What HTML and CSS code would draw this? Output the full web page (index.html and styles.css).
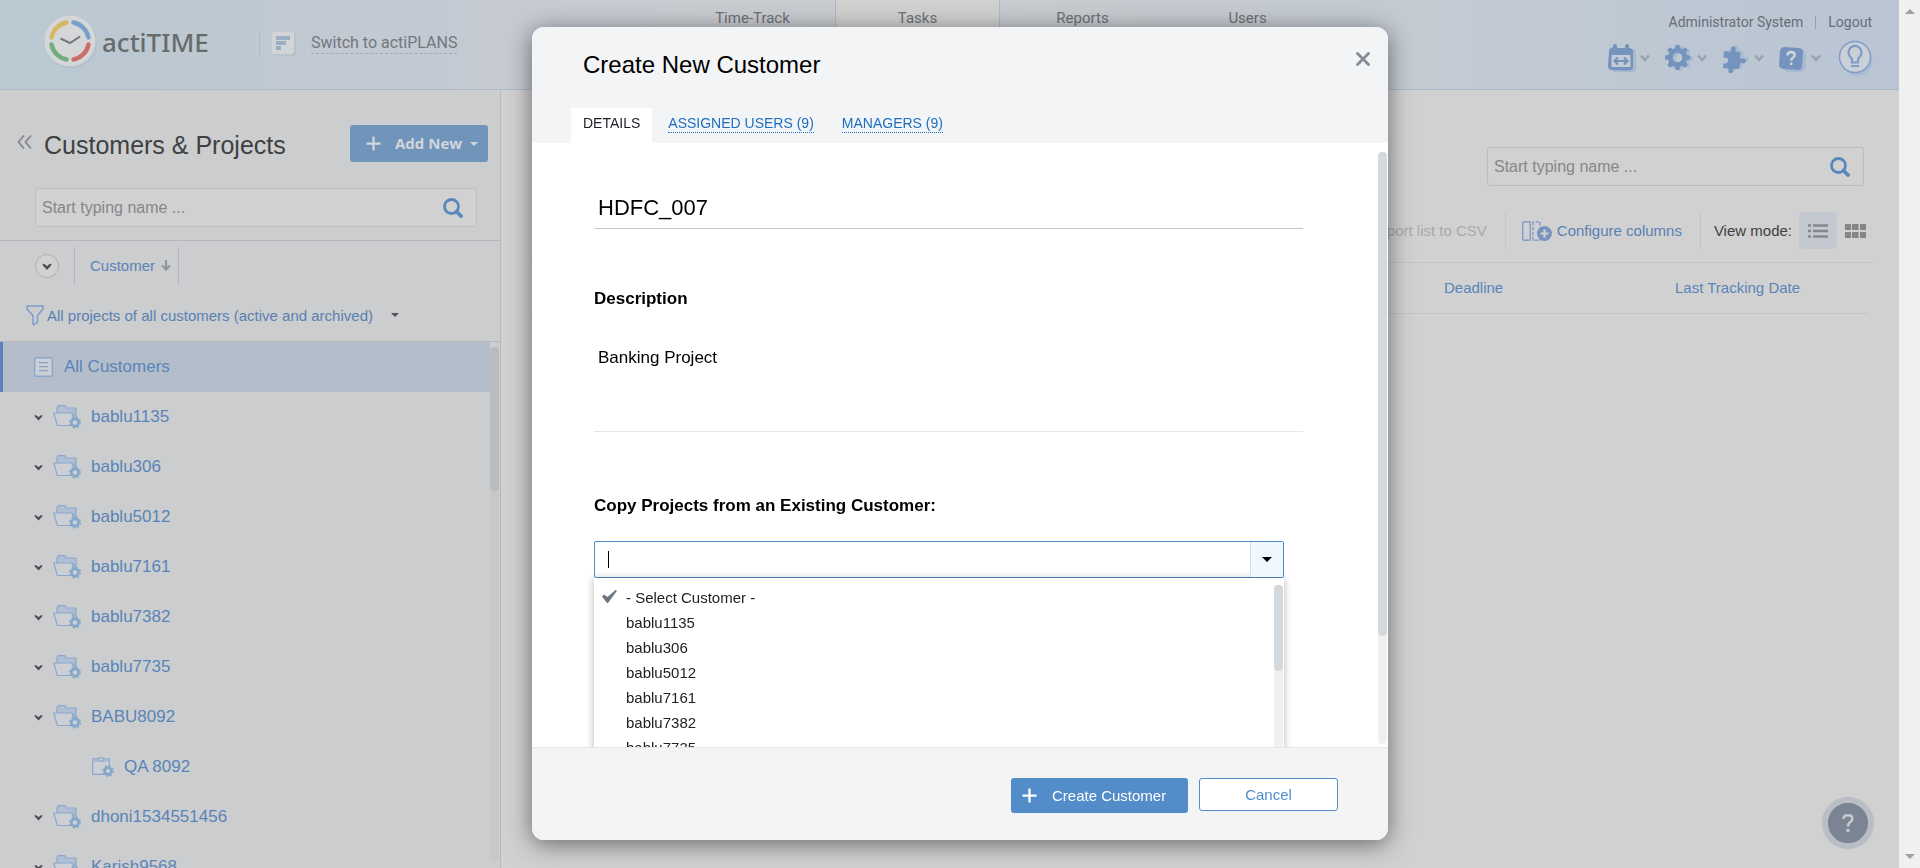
FILE: index.html
```html
<!DOCTYPE html>
<html lang="en">
<head>
<meta charset="utf-8">
<title>actiTIME - Customers &amp; Projects</title>
<link rel="stylesheet" href="styles.css">
</head>
<body>
<svg width="0" height="0" class="defs" aria-hidden="true">
  <defs>
    <symbol id="search" viewBox="0 0 20 20"><circle cx="8.5" cy="8.5" r="7" fill="none" stroke="#5a87bd" stroke-width="2.8"/><path d="M13.5 13.5l4.500 4.500" stroke="#5a87bd" stroke-width="3.8" stroke-linecap="round"/></symbol>
    <symbol id="gear" viewBox="0 0 26 26"><path fill-rule="evenodd" d="M11 0h4l.6 3.4 2.4 1 2.9-2 2.8 2.8-2 2.9 1 2.4 3.3.5v4l-3.3.6-1 2.4 2 2.9-2.8 2.8-2.9-2-2.4 1-.6 3.3h-4l-.6-3.3-2.4-1-2.9 2-2.8-2.8 2-2.9-1-2.4L0 15v-4l3.300-.5 1-2.400-2-2.900 2.800-2.800 2.900 2 2.400-1zM13 8a5 5 0 1 0 0 10a5 5 0 0 0 0-10z"/></symbol>
    <symbol id="puzzle" viewBox="0 0 26 28"><path d="M2 6l6 .5c1.500 0 1.500-1 1.200-2a2.700 2.700 0 1 1 5 0c-.4 1-.2 2 1 2l4 .3-.4 6c0 1 1 1.300 2 .8a2.700 2.700 0 1 1 0 4.600c-1-.5-2-.2-2.200.8l-.4 5.500-5.700-.3c-1 0-1.500.8-1 1.700a2.500 2.500 0 1 1-4.800 0c.3-1 0-2-1-2L1 23.500l.5-5c2 .8 4.800 0 5-2.600.2-2.900-2.700-4.200-5-3z"/></symbol>
    <symbol id="chev" viewBox="0 0 10 8"><path d="M1 1.500l4 4.500 4-4.500" fill="none" stroke="#9aa4ad" stroke-width="2.600"/></symbol>
    <symbol id="folder" viewBox="0 0 28 24">
      <path d="M4 8V3l1.500-2.300h6L13.500 3H23v9L20 9H4z" fill="#b1bfd4" stroke="#8ba8cc" stroke-width="1.200"/>
      <path d="M.8 8h18l1.800 4v8.500H4.300z" fill="#ccd0d4" stroke="#8ba8cc" stroke-width="1.200"/>
      <circle cx="22" cy="17.500" r="3.600" fill="#ccd0d4" stroke="#84a7c9" stroke-width="2.600"/>
      <circle cx="22" cy="17.500" r="5.400" fill="none" stroke="#84a7c9" stroke-width="1.400" stroke-dasharray="2.100 2.140"/>
    </symbol>
    <symbol id="tick" viewBox="0 0 10 7"><path d="M.5 .8l2.400 .4L5 3.200 7.100 1.200l2.400-.4-.6 2L5 6.900 1.100 2.800z" fill="#4b4d50"/></symbol>
    <symbol id="plus" viewBox="0 0 16 16"><path d="M8 .5v15M.5 8h15" stroke="currentColor" stroke-width="2.400"/></symbol>
  </defs>
</svg>

<div class="app">
  <header class="topbar">
    <a class="logo" href="#">
      <svg width="54" height="54" viewBox="0 0 54 54" aria-hidden="true">
        <circle cx="27.500" cy="28" r="25.500" fill="#b3c0cd"/><circle cx="26" cy="26" r="25.500" fill="#d5d6d8"/>
        <g fill="none" stroke-width="4.400" stroke-linecap="round">
          <path d="M7.500 22.500A19 19 0 0 1 22.500 7.500" stroke="#d6b764"/>
          <path d="M29.500 7.500A19 19 0 0 1 44.500 22.500" stroke="#769fca"/>
          <path d="M44.500 29.500A19 19 0 0 1 29.500 44.500" stroke="#cb6d64"/>
          <path d="M22.500 44.500A19 19 0 0 1 7.500 29.500" stroke="#72ad7c"/>
        </g>
        <path d="M16.500 23.500l9.500 4.500 10-6.500" fill="none" stroke="#75777f" stroke-width="2"/>
      </svg>
      <span>actiTIME</span>
    </a>
    <a class="switch" href="#">
      <svg width="24" height="24" viewBox="0 0 24 24" aria-hidden="true"><rect x="2" y="2" width="22" height="22" rx="3" fill="#b6c3cf"/><rect width="22" height="22" rx="3" fill="#d2d4d6"/><path d="M4 4h14v4H4zM4 9h10v4H4zM4 14h5v4H4z" fill="#9aaec6"/></svg>
      <span>Switch to actiPLANS</span>
    </a>
    <nav class="mainnav">
      <a href="#">Time-Track</a><a href="#" class="current">Tasks</a><a href="#">Reports</a><a href="#">Users</a>
    </nav>
    <div class="account">
      <div class="who"><a href="#">Administrator System</a><i></i><a href="#">Logout</a></div>
      <div class="tools">
        <button class="tool" aria-label="Calendar">
          <svg width="28" height="29" viewBox="0 0 28 29"><rect x="3" y="5" width="25" height="23" rx="4" fill="#a9bad0"/><path d="M5 3.500V2a2 2 0 0 1 4 0v2h8V2a2 2 0 0 1 4 0v2a4 4 0 0 1 4 4v14a4 4 0 0 1-4 4.500L4 26a4 4 0 0 1-4-4L1 7a4 4 0 0 1 4-3.500z" fill="#7494be"/><path d="M3.500 11h19v12h-19z" fill="#c3cbd3"/><path d="M7 17h12M10 13.500L6.500 17l3.500 3.500M16 13.500L19.500 17 16 20.500" fill="none" stroke="#7494be" stroke-width="2.200"/></svg>
          <svg width="10" height="8"><use href="#chev"/></svg>
        </button>
        <button class="tool" aria-label="Settings">
          <svg width="28" height="29" viewBox="0 0 28 29"><use href="#gear" x="3" y="2" width="25" height="25" fill="#a9bad0"/><use href="#gear" y="1" width="25" height="25" fill="#7494be"/></svg>
          <svg width="10" height="8"><use href="#chev"/></svg>
        </button>
        <button class="tool" aria-label="Integrations">
          <svg width="28" height="29" viewBox="0 0 28 29"><use href="#puzzle" x="3" y="0" width="25" height="27" fill="#a9bad0"/><use href="#puzzle" x="0" y="1" width="25" height="28" fill="#7494be"/></svg>
          <svg width="10" height="8"><use href="#chev"/></svg>
        </button>
        <button class="tool" aria-label="Help">
          <svg width="28" height="29" viewBox="0 0 28 29"><rect x="3" y="5" width="24" height="23" rx="6" fill="#a9bad0"/><path d="M6 3l14 1q4 .5 4 4l-1 14q-.5 4-4 4l-14-1q-5-.5-5-4L1 7q.5-4 5-4z" fill="#7494be"/><path d="M8.500 11.500q0-3.500 3.600-3.500 3.500 0 3.500 3 0 1.700-1.700 2.700-1.700.9-1.700 2.800M12.200 18.500v2.500" fill="none" stroke="#d3d6da" stroke-width="2.400"/></svg>
          <svg width="10" height="8"><use href="#chev"/></svg>
        </button>
        <button class="tool tips" aria-label="Tips">
          <svg width="36" height="36" viewBox="0 0 36 36"><circle cx="19" cy="20" r="15.500" fill="#a9bad0"/><circle cx="17" cy="17" r="15.500" fill="#cbd0d7" stroke="#7d9ccb" stroke-width="1.400"/><path d="M14 22.500v-2.500q0-1.500-1.300-2.700a6.500 6.500 0 1 1 8.600 0Q20 18.500 20 20v2.500z" fill="none" stroke="#7d9ccb" stroke-width="2.200"/><path d="M13 26h8" stroke="#7d9ccb" stroke-width="2"/></svg>
        </button>
      </div>
    </div>
  </header>

  <div class="columns">
    <aside class="side">
      <div class="side-head">
        <button class="collapse" aria-label="Collapse"><svg width="15" height="14" viewBox="0 0 15 14"><path d="M7 .5L1.500 7 7 13.500M14 .5L8.500 7l5.500 6.500" fill="none" stroke="#86888c" stroke-width="1.800"/></svg></button>
        <h1>Customers &amp; Projects</h1>
        <button class="addnew"><svg width="15" height="15"><use href="#plus"/></svg><span>Add New</span><i class="caret"></i></button>
      </div>
      <label class="search side-search"><input type="text" placeholder="Start typing name ..." aria-label="Search customers"><svg width="20" height="20"><use href="#search"/></svg></label>
      <div class="sortbar">
        <button class="round" aria-label="Expand all"><svg width="10" height="7"><use href="#tick"/></svg></button>
        <a class="sort" href="#">Customer <svg width="10" height="11" viewBox="0 0 10 11"><path d="M5 0v9M1 5.500l4 4 4-4" fill="none" stroke="#8c97a6" stroke-width="2.200"/></svg></a>
      </div>
      <button class="filter"><svg width="18" height="21" viewBox="0 0 18 21"><path d="M1 1h16v3l-5.500 6.500V17L8 20l-1-1v-8.500L1 4z" fill="none" stroke="#7f9cc9" stroke-width="1.500" stroke-linejoin="round"/></svg><span>All projects of all customers (active and archived)</span><i class="caret dark"></i></button>
      <div class="tree-wrap">
        <div class="tree">
          <a class="row all" href="#"><svg width="19" height="20" viewBox="0 0 19 20"><rect x=".7" y=".7" width="17.600" height="18.600" rx="1" fill="#ccd0d4" stroke="#8ba8cc" stroke-width="1.400"/><path d="M5 5.700h9M5 9.700h9M5 13.700h9" stroke="#8ba0c4" stroke-width="1.300"/></svg>All Customers</a>
          <a class="row" href="#"><svg width="9" height="7"><use href="#tick"/></svg><svg width="28" height="24"><use href="#folder"/></svg>bablu1135</a>
          <a class="row" href="#"><svg width="9" height="7"><use href="#tick"/></svg><svg width="28" height="24"><use href="#folder"/></svg>bablu306</a>
          <a class="row" href="#"><svg width="9" height="7"><use href="#tick"/></svg><svg width="28" height="24"><use href="#folder"/></svg>bablu5012</a>
          <a class="row" href="#"><svg width="9" height="7"><use href="#tick"/></svg><svg width="28" height="24"><use href="#folder"/></svg>bablu7161</a>
          <a class="row" href="#"><svg width="9" height="7"><use href="#tick"/></svg><svg width="28" height="24"><use href="#folder"/></svg>bablu7382</a>
          <a class="row" href="#"><svg width="9" height="7"><use href="#tick"/></svg><svg width="28" height="24"><use href="#folder"/></svg>bablu7735</a>
          <a class="row" href="#"><svg width="9" height="7"><use href="#tick"/></svg><svg width="28" height="24"><use href="#folder"/></svg>BABU8092</a>
          <a class="row child" href="#"><svg width="22" height="20" viewBox="0 0 22 20"><path d="M.7 2h16.600v15.300H.7z" fill="#ccd0d4" stroke="#8ba8cc" stroke-width="1.300"/><path d="M1 2h16v3H1z" fill="#a9bcd2"/><rect x="7" y=".6" width="4" height="3.400" fill="#ccd0d4" stroke="#84a7c9"/><circle cx="16" cy="14" r="3.400" fill="#ccd0d4" stroke="#84a7c9" stroke-width="2.600"/><circle cx="16" cy="14" r="5.200" fill="none" stroke="#84a7c9" stroke-width="1.400" stroke-dasharray="2 2.080"/></svg>QA 8092</a>
          <a class="row" href="#"><svg width="9" height="7"><use href="#tick"/></svg><svg width="28" height="24"><use href="#folder"/></svg>dhoni1534551456</a>
          <a class="row" href="#"><svg width="9" height="7"><use href="#tick"/></svg><svg width="28" height="24"><use href="#folder"/></svg>Karish9568</a>
        </div>
        <div class="track side-track"><div class="thumb"></div></div>
      </div>
    </aside>
    <main class="content">
      <label class="search main-search"><input type="text" placeholder="Start typing name ..." aria-label="Search tasks"><svg width="20" height="20"><use href="#search"/></svg></label>
      <div class="toolbar">
        <button class="csv" disabled>Export list to CSV</button>
        <button class="configure"><svg width="30" height="20" viewBox="0 0 30 20"><rect x=".7" y=".7" width="7.600" height="18.600" rx="1.500" fill="none" stroke="#7f9cc9" stroke-width="1.400"/><path d="M11 1v18.300h7V.7z" fill="none" stroke="#7f9cc9" stroke-width="1.400" stroke-dasharray="3.500 1.500"/><circle cx="22.500" cy="12.500" r="7.500" fill="#7794bf"/><path d="M22.500 8.500v8M18.500 12.500h8" stroke="#d1d1d1" stroke-width="2.200"/></svg>Configure columns</button>
        <div class="viewmode"><span>View mode:</span>
          <button class="mode on" aria-label="List"><svg width="20" height="14" viewBox="0 0 20 14"><path d="M0 1.500h3M0 7h3M0 12.500h3M5 1.500h15M5 7h15M5 12.500h15" stroke="#85878b" stroke-width="2.600"/></svg></button>
          <button class="mode" aria-label="Grid"><svg width="21" height="14" viewBox="0 0 21 14"><path d="M0 0h6v6H0zM7 0h6.500v6H7zM15 0h6v6h-6zM0 8h6v6H0zM7 8h6.500v6H7zM15 8h6v6h-6z" fill="#858585"/></svg></button>
        </div>
      </div>
      <table class="tasks"><thead><tr><th class="c-name"></th><th class="c-dead"><a href="#">Deadline</a></th><th class="c-last"><a href="#">Last Tracking Date</a></th></tr></thead></table>
    </main>
  </div>
  <button class="help" aria-label="Help center"><svg width="12" height="19" viewBox="0 0 12 19"><path d="M1.500 5q0-3.800 4.500-3.800 4.300 0 4.300 3.600 0 2-2.200 3.300Q6 9.300 6 12.500" fill="none" stroke="#c5c8cd" stroke-width="2.600"/><circle cx="6" cy="16.500" r="1.800" fill="#c5c8cd"/></svg></button>
</div>
<div class="page-scroll" aria-hidden="true"><i class="up"></i><i class="down"></i></div>

<div class="overlay">
  <section class="modal" role="dialog" aria-labelledby="dlg-title">
    <div class="modal-head">
      <div class="modal-title"><h2 id="dlg-title">Create New Customer</h2>
        <button class="close" aria-label="Close"><svg width="14" height="14" viewBox="0 0 14 14"><path d="M1.500 1.500l11 11M12.500 1.500l-11 11" stroke="#868a92" stroke-width="2.800" stroke-linecap="round"/></svg></button></div>
      <div class="tabs"><a class="tab on" href="#">DETAILS</a><a class="tab" href="#"><span>ASSIGNED USERS (9)</span></a><a class="tab" href="#"><span>MANAGERS (9)</span></a></div>
    </div>
    <div class="modal-body">
      <div class="form">
        <input class="name" type="text" value="HDFC_007" aria-label="Customer name">
        <label class="label" for="desc">Description</label>
        <textarea id="desc" class="desc">Banking Project</textarea>
        <label class="label copy" for="from">Copy Projects from an Existing Customer:</label>
        <div class="combo">
          <div class="combo-box"><input id="from" type="text" role="combobox" aria-expanded="true"><i class="cursor"></i><button class="combo-btn" aria-label="Open list"><i class="caret black"></i></button></div>
          <div class="menu">
            <ul role="listbox">
              <li role="option" aria-selected="true"><svg width="15" height="13" viewBox="0 0 15 13"><path d="M0 6.500L2 4.500l3.500 2.500L13.500 0 15 .8 6 13H5z" fill="#6d767e"/></svg>- Select Customer -</li>
              <li role="option">bablu1135</li><li role="option">bablu306</li><li role="option">bablu5012</li><li role="option">bablu7161</li><li role="option">bablu7382</li><li role="option">bablu7735</li>
            </ul>
            <div class="track menu-track"><div class="thumb"></div></div>
          </div>
        </div>
      </div>
      <div class="track modal-track"><div class="thumb"></div></div>
    </div>
    <div class="modal-foot">
      <button class="create"><svg width="15" height="15"><use href="#plus"/></svg>Create Customer</button>
      <button class="cancel">Cancel</button>
    </div>
  </section>
</div>
</body>
</html>
```
FILE: styles.css
```css
* { box-sizing: border-box; }
body { margin: 0; height: 100vh; display: flex; overflow: hidden; background: #d1d1d1; font-family: "Liberation Sans", Arial, sans-serif; font-size: 15px; color: #3f4042; }
a { color: #5a84b9; text-decoration: none; }
button { font: inherit; color: inherit; background: none; border: 0; padding: 0; cursor: pointer; }
input, textarea { font: inherit; border: 0; outline: 0; background: none; padding: 0; min-width: 0; }
svg { flex: none; display: block; }
h1, h2, ul { margin: 0; padding: 0; font-weight: 400; list-style: none; }
.defs { position: absolute; }
.app { flex: 1; min-width: 0; display: flex; flex-direction: column; position: relative; }

/* window scrollbar */
.page-scroll { width: 21px; background: #f0f0f0; display: flex; flex-direction: column; justify-content: space-between; align-items: center; padding: 9px 0; }
.up, .down { border: 5px solid transparent; }
.up { border-top: 0; border-bottom-color: #a0a0a0; }
.down { border-bottom: 0; border-top-color: #a0a0a0; }

/* top bar */
.topbar { height: 90px; flex: none; display: grid; grid-template-columns: 670px 1fr auto; border-bottom: 1px solid #afb9c7; background: linear-gradient(90deg, #b9c8d1 0, #c6cad3 28%, #c9ccd0 38%, #c7cacf 58%, #c3cbd3 75%, #b9c5d4 100%); font-family: Roboto, sans-serif; grid-template-areas: "logo nav account"; }
.logo { grid-area: logo; justify-self: start; display: flex; gap: 4px; padding: 15px 0 0 44px; color: #686b6c; font: 500 26px/54px "Noto Sans", sans-serif; }
.switch { grid-area: logo; align-self: start; justify-self: start; margin: 32px 0 0 259px; padding-left: 12px; height: 24px; border-left: 1px solid #adbac8; display: flex; gap: 15px; font-size: 16px; line-height: 22px; color: #72777e; }
.switch span { border-bottom: 1px dashed #a0a9b2; height: 22px; }
.mainnav { grid-area: nav; display: flex; }
.mainnav a { width: 165px; padding-top: 9px; text-align: center; line-height: 18px; color: #6d7077; }
.mainnav .current { background: #d1d1d1; border: solid #b1b8c4; border-width: 0 1px; }
.account { grid-area: account; display: flex; flex-direction: column; align-items: flex-end; padding-right: 25px; }
.who { display: flex; align-items: center; gap: 12px; padding: 13px 2px 0 0; font-size: 14px; line-height: 18px; }
.who a { color: #6a6d74; }
.who i { width: 1px; height: 13px; background: #a09d9c; }
.tools { display: flex; align-items: center; gap: 15px; margin-top: 9px; }
.tool { display: flex; align-items: center; gap: 4px; height: 36px; }
.tips { margin-left: 2px; }

/* left column */
.columns { flex: 1; min-height: 0; display: flex; }
.side { width: 501px; flex: none; display: flex; flex-direction: column; background: #cbcdce; border-right: 1px solid #b8babf; }
.side-head { display: flex; align-items: center; padding: 35px 12px 0 17px; }
.collapse { width: 27px; padding-bottom: 4px; }
h1 { font-size: 25px; line-height: 30px; flex: 1; padding-top: 2px; }
.addnew { width: 138px; height: 37px; border-radius: 3px; background: #7094ba; color: #d2d6da; display: flex; align-items: center; padding: 0 10px 0 16px; font: 700 15px/20px "Open Sans", sans-serif; }
.addnew span { flex: 1; text-align: left; padding: 0 0 2px 14px; }
.caret { border: 4px solid transparent; border-bottom: 0; border-top-color: #d2d6da; }
.caret.dark { border-top-color: #505256; }
.caret.black { border-width: 5px 5px 0; border-top-color: #000; }
.search { display: flex; align-items: center; height: 39px; border: 1px solid #bfc0c1; border-radius: 3px; background: #d1d1d1; padding: 0 13px 0 6px; font-size: 16px; }
.search input { flex: 1; height: 100%; }
.search input::placeholder { color: #85878a; opacity: 1; }
.side-search { margin: 26px 23px 0 35px; }
.sortbar { display: flex; align-items: center; margin-top: 13px; border-top: 1px solid #b5b7ba; padding: 6px 0 0 35px; }
.round { width: 24px; height: 24px; border: 1px solid #aeb0b2; border-radius: 50%; background: #d1d1d1; display: grid; place-items: center; }
.sort { display: flex; align-items: center; gap: 6px; height: 38px; margin-left: 15px; padding: 0 7px 2px 15px; border: solid #b5b7ba; border-width: 0 1px; }
.filter { display: flex; align-items: center; gap: 3px; height: 57px; padding: 4px 0 0 26px; color: #5a80b4; border-bottom: 1px solid #b5b7ba; }
.filter .caret { margin-left: 15px; }
.tree-wrap { flex: 1; min-height: 0; display: flex; }
.tree { flex: 1; overflow: hidden; }
.row { display: flex; align-items: center; height: 50px; padding-left: 34px; font-size: 17px; }
.row svg + svg { margin: 0 10px; }
.all { background: #b4becb; border-left: 3px solid #5a84b9; padding-left: 31px; gap: 11px; }
.child { padding-left: 92px; gap: 10px; }
.track { width: 9px; flex: none; border-radius: 4px; background: #eff1f1; }
.thumb { border-radius: 4px; background: #d4d9de; }
.side-track { margin: 5px 1px 7px 0; background: #c8c8c8; }
.side-track .thumb { height: 144px; background: #b9bcbe; }

/* right column */
.content { flex: 1; min-width: 0; padding: 57px 26px 0 30px; display: flex; flex-direction: column; }
.main-search { width: 377px; align-self: flex-end; margin-right: 9px; border-color: #bdbdbd; }
.toolbar { display: flex; justify-content: flex-end; height: 77px; padding: 26px 0 13px; border-bottom: 1px solid #c4c4c4; }
.toolbar > * { display: flex; align-items: center; }
.csv { color: #a8a9ab; padding-right: 18px; border-right: 1px solid #c4c4c4; }
.configure { color: #5a80b4; gap: 5px; padding: 0 18px 0 16px; border-right: 1px solid #c4c4c4; }
.viewmode { padding-left: 13px; }
.viewmode span { padding-right: 7px; }
.mode { width: 36px; height: 37px; display: grid; place-items: center; border-radius: 3px; }
.mode.on { width: 38px; background: #c3c8d1; }
.tasks { table-layout: fixed; border-collapse: collapse; border-bottom: 1px solid #c4c4c4; margin-right: 4px; }
.tasks th { height: 50px; padding: 0; text-align: left; font-weight: 400; }
.c-dead { width: 231px; }
.c-last { width: 194px; }
.help { position: absolute; right: 25px; bottom: 19px; width: 52px; height: 52px; border: 6px solid #b9bdc4; border-radius: 50%; background: #7b8493; display: grid; place-items: center; }

/* dialog */
.overlay { position: fixed; inset: 0; display: flex; justify-content: center; padding: 27px 0 28px; }
.modal { width: 856px; max-width: 100%; display: flex; flex-direction: column; background: #fff; border-radius: 12px; overflow: hidden; box-shadow: 0 4px 24px rgba(0, 0, 0, .5); color: #000; }
.modal-head { background: #f3f4f6; padding: 21px 18px 0 39px; }
.modal-title { display: flex; justify-content: space-between; align-items: flex-start; height: 60px; }
.modal-title h2 { font-size: 24px; line-height: 34px; padding-left: 12px; }
.close { padding: 4px 0; }
.tabs { display: flex; height: 35px; font-size: 14px; }
.tab { padding: 6px 12px 0; margin-right: 4px; line-height: 18px; color: #1c6fc0; }
.tab span { display: block; border-bottom: 1px dotted #1c6fc0; }
.tab.on { background: #fff; color: #1c1f26; }
.modal-body { flex: 1; min-height: 0; display: flex; overflow: hidden; }
.form { flex: 1; display: flex; flex-direction: column; padding: 45px 75px 0 62px; }
.name { height: 41px; padding-left: 4px; font-size: 22px; border-bottom: 1px solid #c3c5c7; flex: none; }
.label { margin-top: 60px; font-weight: 700; font-size: 17px; line-height: 20px; }
.desc { resize: none; flex: none; height: 94px; margin-top: 29px; padding: 10px 4px; font-size: 17px; line-height: 20px; border-bottom: 1px solid #e6e7e8; overflow: hidden; }
.copy { margin-top: 64px; }
.combo { margin: 25px 19px 0 0; flex: none; }
.combo-box { display: flex; align-items: center; height: 37px; border: 1px solid #4f8ac9; border-radius: 2px; padding-left: 13px; }
.combo-box input { flex: 1; order: 1; height: 100%; }
.cursor { width: 1px; height: 17px; background: #000; }
.combo-btn { order: 2; width: 33px; height: 100%; background: #f0f7fe; border-left: 1px solid #d9dee3; display: grid; place-items: center; }
.menu { display: flex; justify-content: space-between; padding: 7px 1px 0 32px; box-shadow: 0 1px 8px rgba(0, 0, 0, .3); height: 250px; }
.menu li { line-height: 25px; display: flex; align-items: center; color: #222; }
.menu li svg { margin: 0 9px 2px -24px; }
.menu-track .thumb { height: 86px; }
.modal-track { margin: 9px 1px 3px 0; }
.modal-track .thumb { height: 484px; }
.modal-foot { display: flex; justify-content: flex-end; align-items: flex-start; gap: 11px; padding: 30px 50px 27px; background: #f3f4f6; border-top: 1px solid #e3e5e7; }
.create { width: 177px; height: 35px; border-radius: 3px; background: #528cc9; color: #fff; display: flex; align-items: center; gap: 15px; padding: 0 0 1px 11px; }
.cancel { width: 139px; height: 33px; border: 1px solid #528cc9; border-radius: 3px; background: #fff; color: #528cc9; }
```
